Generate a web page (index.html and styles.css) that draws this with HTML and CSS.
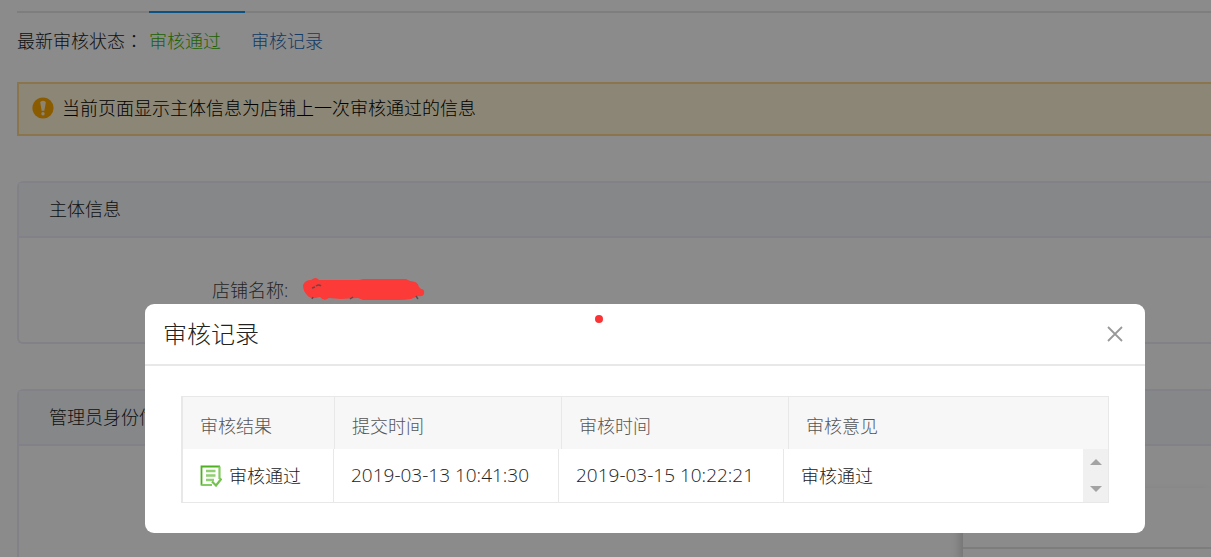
FILE: index.html
```html
<!DOCTYPE html>
<html lang="zh-CN">
<head>
<meta charset="utf-8">
<meta name="viewport" content="width=device-width, initial-scale=1">
<title>审核记录</title>
<link rel="stylesheet" href="styles.css">
</head>
<body>
<main class="page">
  <div class="tabs"><div class="tab-active"></div></div>
  <div class="status">
    <span class="status-label">最新审核状态<span class="colon" lang="zh-TW">：</span></span>
    <span class="status-value">审核通过</span>
    <a class="status-link" href="#records">审核记录</a>
  </div>
  <div class="alert">
    <svg class="alert-icon" viewBox="0 0 22 22" aria-hidden="true">
      <circle cx="11" cy="11" r="10.6" fill="#ffa800"/>
      <path d="M8.2 5.4Q8.4 3.8 11 3.8T13.8 5.4L12.3 13.8H9.7Z" fill="#fff3d0"/>
      <circle cx="11" cy="16.8" r="1.7" fill="#fff3d0"/>
    </svg>
    <span>当前页面显示主体信息为店铺上一次审核通过的信息</span>
  </div>
  <section class="panel">
    <h2 class="panel-title">主体信息</h2>
    <div class="panel-body">
      <span class="field-label">店铺名称:</span>
    </div>
  </section>
  <section class="panel panel-fill">
    <h2 class="panel-title">管理员身份信息</h2>
  </section>
</main>
<aside class="float-box"><div class="float-top"></div></aside>

<div class="overlay">
  <svg class="scribble" viewBox="0 0 122 24" aria-hidden="true">
    <path d="M0 8Q2 3 8 3Q13-1 16 3L19 3Q40 3 56 3L60 2H103L107 4Q115 4 116 10L118 12Q122 12 121 17Q120 20 115 19L108 22Q102 23 95 23H60L55 21L38 22L26 21Q21 25 17 20Q7 23 4 18Q0 14 0 8Z" fill="#fc3a38"/>
    <path d="M9 11L12 10M13 9Q16 7 18 9M9 22L10 20M47 22L50 20M113 19L115 22" stroke="#65494b" stroke-width="1.5" fill="none"/>
  </svg>
  <section class="modal" id="records" role="dialog" aria-labelledby="modal-title">
    <header class="modal-head">
      <h1 class="modal-title" id="modal-title">审核记录</h1>
      <button class="close" type="button" aria-label="关闭">
        <svg viewBox="0 0 16 16" aria-hidden="true"><path d="M1 1L15 15M15 1L1 15" stroke="#999" stroke-width="1.8" fill="none"/></svg>
      </button>
    </header>
    <div class="modal-body">
      <div class="records">
        <table class="grid grid-head">
          <thead><tr><th class="first">审核结果</th><th class="mid">提交时间</th><th class="mid">审核时间</th><th>审核意见</th></tr></thead>
        </table>
        <div class="rows">
          <table class="grid grid-rows">
            <tbody><tr>
              <td class="first"><div class="result">
                <svg class="doc-icon" viewBox="0 0 22 22" aria-hidden="true">
                  <path d="M1.5 20.5V1.5H20" fill="none" stroke="#4fb022" stroke-width="1.8"/>
                  <path d="M19.5 1.5V14M1.5 20H12" fill="none" stroke="#84cb63" stroke-width="2.2"/>
                  <path d="M6 6H15.5M6 10.5H15.5M6 15H14" fill="none" stroke="#8fd070" stroke-width="2.6"/>
                  <path d="M12 16.5L16 20.5L21.5 13.5" fill="none" stroke="#72c24e" stroke-width="2.2"/>
                </svg>
                <span>审核通过</span></div></td>
              <td class="mid"><time class="date">2019-03-13 10:41:30</time></td>
              <td class="mid"><time class="date">2019-03-15 10:22:21</time></td>
              <td>审核通过</td>
            </tr></tbody>
          </table>
          <div class="scroller">
            <button class="arrow" type="button" aria-label="向上滚动"><svg viewBox="0 0 12 6"><path d="M6 0L12 6H0Z" fill="#a3a3a3"/></svg></button>
            <button class="arrow" type="button" aria-label="向下滚动"><svg viewBox="0 0 12 6"><path d="M6 6L0 0H12Z" fill="#a3a3a3"/></svg></button>
          </div>
        </div>
      </div>
    </div>
    <span class="pointer-dot"></span>
  </section>
</div>
</body>
</html>
```
FILE: styles.css
```css
* { box-sizing: border-box; }

body {
  margin: 0;
  background: #fff;
  color: #222;
  font-family: "Open Sans", "Noto Sans CJK SC", sans-serif;
  font-size: 18px;
  font-weight: 300;
  line-height: 28px;
}

.page {
  display: flex;
  flex-direction: column;
  height: 100vh;
  padding: 11px 0 0 17px;
}

.tabs { flex: none; height: 2px; background: #e8e8e8; }
.tab-active { width: 96px; height: 2px; margin-left: 132px; background: #1296f0; }

.status { display: flex; padding-top: 14px; }
.status-label { width: 132px; white-space: nowrap; }
.colon { font-family: "Noto Sans CJK TC", sans-serif; line-height: 1; }
.status-value { margin-right: 30px; color: #3cb400; }
.status-link { color: #246cb8; text-decoration: none; }

.alert {
  display: flex;
  flex: none;
  align-items: center;
  gap: 8px;
  height: 54px;
  margin-top: 27px;
  padding: 0 13px 2px;
  border: 2px solid #ffd78c;
  border-right: 0;
  background: #fff6d9;
  color: #000;
}
.alert-icon { width: 22px; height: 22px; }

.panel {
  flex: none;
  height: 163px;
  margin-top: 45px;
  border: 2px solid #ededf7;
  border-right: 0;
  border-radius: 6px 0 0 6px;
}
.panel-fill {
  flex: 1;
  border-bottom: 0;
  border-radius: 6px 0 0 0;
}
.panel-title {
  margin: 0;
  padding: 12px 30px 13px;
  border-bottom: 2px solid #ededf7;
  background: #f4f8fb;
  font-size: 18px;
  font-weight: 300;
}
.panel-body { padding: 38px 193px; }
.field-label { color: #444; }

.float-box {
  position: fixed;
  right: 0;
  bottom: 0;
  width: 248px;
  height: 69px;
  background: #fff;
  box-shadow: -4px 4px 8px rgba(0, 0, 0, .16);
}
.float-top { height: 61px; border-bottom: 2px solid #e6e6e6; }

.overlay {
  position: fixed;
  inset: 0;
  padding: 304px 66px 0 145px;
  background: rgba(0, 0, 0, .455);
}
.scribble { position: absolute; left: 303px; top: 277px; width: 122px; height: 24px; }

.modal { position: relative; border-radius: 9px; background: #fff; }
.modal-head {
  display: flex;
  align-items: center;
  justify-content: space-between;
  height: 62px;
  padding: 0 22px 0 18px;
  border-bottom: 2px solid #e8e8e8;
}
.modal-title { margin: 0; font-size: 24px; font-weight: 300; }
.close { display: flex; padding: 0; border: 0; background: none; }
.close svg { width: 16px; height: 16px; }
.modal-body { padding: 30px 36px; }
.pointer-dot {
  position: absolute;
  left: 450px;
  top: 11px;
  width: 8px;
  height: 8px;
  border-radius: 50%;
  background: #fc3335;
}

.records { border: 1px solid #e8e8e8; border-left-width: 2px; }
.grid { width: 100%; border-collapse: separate; border-spacing: 0; table-layout: fixed; }
.grid th, .grid td {
  padding: 0 17px;
  border-right: 1px solid #e8e8e8;
  font-weight: 300;
  text-align: left;
  white-space: nowrap;
}
.grid th:last-child, .grid td:last-child { border-right: 0; }
.grid-head th { height: 52px; padding-top: 6px; background: #f7f7f7; color: #555; }
.grid-head .first { width: 152px; }
.grid-head .mid { width: 227px; }
.grid-rows td { height: 53px; }
.grid-rows .first { width: 151px; }
.grid-rows .mid { width: 225px; padding-bottom: 2px; }
.date { font-size: 19px; }
.result { display: flex; align-items: center; gap: 7px; }
.doc-icon { width: 22px; height: 22px; }

.rows { display: flex; }
.scroller {
  display: flex;
  flex: none;
  flex-direction: column;
  width: 25px;
  background: #f0f0f0;
}
.arrow {
  display: flex;
  flex: 1;
  align-items: center;
  justify-content: center;
  padding: 0;
  border: 0;
  background: none;
}
.arrow svg { width: 12px; height: 6px; }
```
